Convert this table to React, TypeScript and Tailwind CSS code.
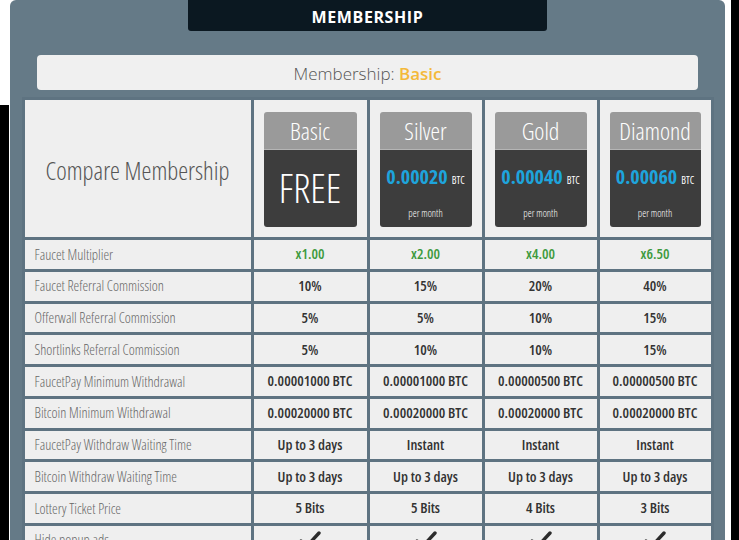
import React from "react";

const rows: { label: string; values: string[]; green?: boolean; check?: boolean }[] = [
  { label: "Faucet Multiplier", values: ["x1.00", "x2.00", "x4.00", "x6.50"], green: true },
  { label: "Faucet Referral Commission", values: ["10%", "15%", "20%", "40%"] },
  { label: "Offerwall Referral Commission", values: ["5%", "5%", "10%", "15%"] },
  { label: "Shortlinks Referral Commission", values: ["5%", "10%", "10%", "15%"] },
  { label: "FaucetPay Minimum Withdrawal", values: ["0.00001000 BTC", "0.00001000 BTC", "0.00000500 BTC", "0.00000500 BTC"] },
  { label: "Bitcoin Minimum Withdrawal", values: ["0.00020000 BTC", "0.00020000 BTC", "0.00020000 BTC", "0.00020000 BTC"] },
  { label: "FaucetPay Withdraw Waiting Time", values: ["Up to 3 days", "Instant", "Instant", "Instant"] },
  { label: "Bitcoin Withdraw Waiting Time", values: ["Up to 3 days", "Up to 3 days", "Up to 3 days", "Up to 3 days"] },
  { label: "Lottery Ticket Price", values: ["5 Bits", "5 Bits", "4 Bits", "3 Bits"] },
  { label: "Hide popup ads", values: ["", "", "", ""], check: true },
];

const plans = [
  { name: "Basic", price: null as string | null },
  { name: "Silver", price: "0.00020" },
  { name: "Gold", price: "0.00040" },
  { name: "Diamond", price: "0.00060" },
];

function Check() {
  return (
    <svg width="22" height="18" viewBox="0 0 22 18">
      <path d="M2 10 L8 15 L20 2" fill="none" stroke="#2b2b2b" strokeWidth="3.4" strokeLinecap="round" strokeLinejoin="round" />
    </svg>
  );
}

export default function App() {
  return (
    <div className="w-[739px] h-[540px] overflow-hidden flex bg-white font-['Open_Sans',sans-serif]">
      <div className="w-[9px] flex flex-col">
        <div className="h-[105px] bg-white" />
        <div className="flex-1 bg-black" />
      </div>
      <div className="w-[1px]" />
      <div className="w-[715px] h-[560px] bg-[#657a87] rounded-t-[6px] flex flex-col items-center">
        <div className="w-[359px] h-[31px] bg-[#0b1821] rounded-b-[3px] flex items-center justify-center pt-[2px] text-white font-bold text-[16px] tracking-[0.6px]">
          MEMBERSHIP
        </div>
        <div className="mt-[24px] w-[661px] h-[35px] bg-[#f0f0f0] rounded-[4px] flex items-center justify-center pt-[2px] text-[17px] text-[#555] font-light">
          <span>Membership:&nbsp;</span>
          <span className="text-[#f4b93a] font-semibold">Basic</span>
        </div>
        <div className="mt-[7px] grid grid-cols-[226px_113px_112px_112px_111px] grid-rows-[137px] auto-rows-[28.75px] gap-[3px] p-[3px] bg-[#5e7381] [font-stretch:condensed]">
          <div className="bg-[#efefef] flex items-center justify-center pt-[4px] text-[25px] text-[#555] font-light">
            Compare Membership
          </div>
          {plans.map((p) => (
            <div key={p.name} className="bg-[#efefef] px-[10px] pt-[12px]">
              <div className="h-[115px] rounded-[3px] overflow-hidden flex flex-col">
                <div className="h-[38px] bg-[#9a9a9a] border-b border-[#b5b5b5] flex items-center justify-center text-white text-[24px] font-light">
                  {p.name}
                </div>
                <div className="flex-1 bg-[#3d3d3d] flex flex-col items-center">
                  {p.price === null ? (
                    <div className="flex-1 flex items-center justify-center text-white text-[40px] font-light leading-none pb-[2px]">
                      FREE
                    </div>
                  ) : (
                    <>
                      <div className="mt-[17px] h-[22px] flex items-baseline">
                        <span className="text-[#1ea4dc] text-[20px] font-bold leading-none">{p.price}</span>
                        <span className="text-white text-[10px] ml-[4px] leading-none">BTC</span>
                      </div>
                      <div className="mt-[19px] text-white text-[10px] font-light leading-none">per month</div>
                    </>
                  )}
                </div>
              </div>
            </div>
          ))}
          {rows.map((r) => (
            <React.Fragment key={r.label}>
              <div className="bg-[#efefef] flex items-center pl-[10px] text-[14.3px] text-[#666] font-light whitespace-nowrap">
                {r.label}
              </div>
              {r.values.map((v, i) => (
                <div
                  key={i}
                  className={
                    "bg-[#efefef] flex items-center justify-center text-[14.6px] font-semibold whitespace-nowrap " +
                    (r.green ? "text-[#3d9a3d]" : "text-[#333]")
                  }
                >
                  {r.check ? <Check /> : v}
                </div>
              ))}
            </React.Fragment>
          ))}
        </div>
      </div>
      <div className="w-[6px] bg-white" />
      <div className="flex-1 bg-black" />
    </div>
  );
}
